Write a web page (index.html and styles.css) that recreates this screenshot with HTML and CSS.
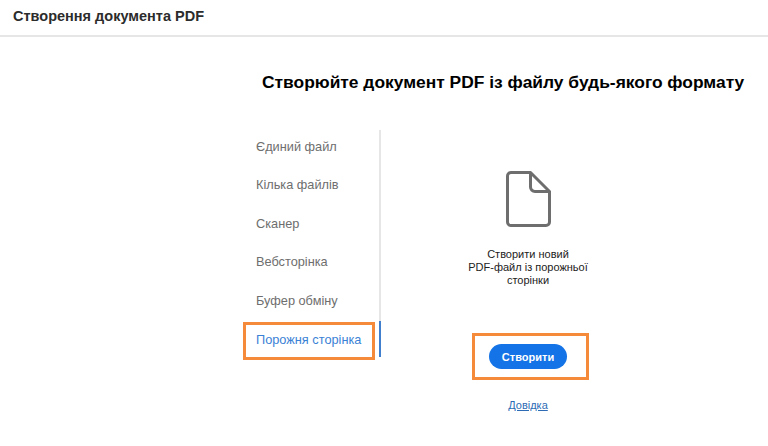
FILE: index.html
```html
<!DOCTYPE html>
<html lang="uk">
<head>
  <meta charset="UTF-8">
  <meta name="viewport" content="width=device-width, initial-scale=1.0">
  <title>Створення документа PDF</title>
  <link rel="stylesheet" href="styles.css">
</head>
<body>
  <header class="topbar">
    <h1>Створення документа PDF</h1>
  </header>

  <main class="content">
    <h2>Створюйте документ PDF із файлу будь-якого формату</h2>

    <div class="row">
      <!-- Tabs -->
      <nav class="tabs">
        <a class="tab">Єдиний файл</a>
        <a class="tab">Кілька файлів</a>
        <a class="tab">Сканер</a>
        <a class="tab">Вебсторінка</a>
        <a class="tab">Буфер обміну</a>
        <a class="tab active">Порожня сторінка</a>
      </nav>

      <!-- Blank page panel -->
      <section class="panel">
        <svg class="page-icon" width="45" height="56" viewBox="0 0 45 56" fill="none" stroke="#6e6e6e" stroke-width="3" stroke-linejoin="round">
          <path d="M5 1.5H24.5L43.5 20.5V51A3.5 3.5 0 0 1 40 54.5H5A3.5 3.5 0 0 1 1.5 51V5A3.5 3.5 0 0 1 5 1.5Z"/>
          <path d="M24.5 2V16A4.5 4.5 0 0 0 29 20.5H43"/>
        </svg>
        <p class="panel-text">Створити новий<br>PDF-файл із порожньої<br>сторінки</p>
        <div class="action-box">
          <button class="btn">Створити</button>
        </div>
        <a class="help" href="#">Довідка</a>
      </section>
    </div>
  </main>
</body>
</html>
```

FILE: styles.css
```css
body {
  margin: 0;
  font-family: "Liberation Sans", Arial, sans-serif;
  background-color: #fff;
  color: #000;
}

.topbar {
  height: 35px;
  border-bottom: 2px solid #e6e6e6;
  padding-left: 13px;
}

.topbar h1 {
  margin: 0;
  font-size: 14.5px;
  line-height: 32px;
  color: #2c2c2c;
}

.content {
  padding-left: 243px;
}

.content h2 {
  margin: 33px 0 0 19px;
  font-size: 17.4px;
  line-height: 24px;
  white-space: nowrap;
}

.row {
  display: flex;
  margin-top: 36px;
}

.tabs {
  width: 136px;
  height: 227px;
  border-right: 2px solid #e6e6e6;
  position: relative;
  display: flex;
  flex-direction: column;
}

.tab {
  height: 38.4px;
  line-height: 33.4px;
  padding-left: 13px;
  font-size: 12.75px;
  color: #6e6e6e;
  flex: none;
}

.tab.active {
  width: 132px;
  height: 38px;
  box-sizing: border-box;
  border: 3px solid #f58a3a;
  padding-left: 10px;
  line-height: 30px;
  color: #3b82d6;
}

/* blue marker over the divider */
.tabs::after {
  content: "";
  position: absolute;
  right: -2px;
  bottom: 0;
  width: 2px;
  height: 36px;
  background-color: #3f7fce;
}

.panel {
  width: 294px;
  display: flex;
  flex-direction: column;
  align-items: center;
}

.page-icon {
  margin-top: 41px;
}

.panel-text {
  margin: 21px 0 0;
  font-size: 11px;
  line-height: 13px;
  text-align: center;
  color: #222;
}

.action-box {
  align-self: flex-start;
  width: 117px;
  height: 47px;
  box-sizing: border-box;
  border: 3px solid #f58a3a;
  margin: 46px 0 0 91px;
  padding-left: 14px;
  display: flex;
  align-items: center;
}

.btn {
  width: 78px;
  height: 25px;
  padding: 0;
  border: none;
  border-radius: 13px;
  background-color: #1473e6;
  color: white;
  font-family: inherit;
  font-size: 11px;
  font-weight: bold;
}

.help {
  margin-top: 18px;
  font-size: 11px;
  line-height: 14px;
  color: #2d6cb5;
}
```
